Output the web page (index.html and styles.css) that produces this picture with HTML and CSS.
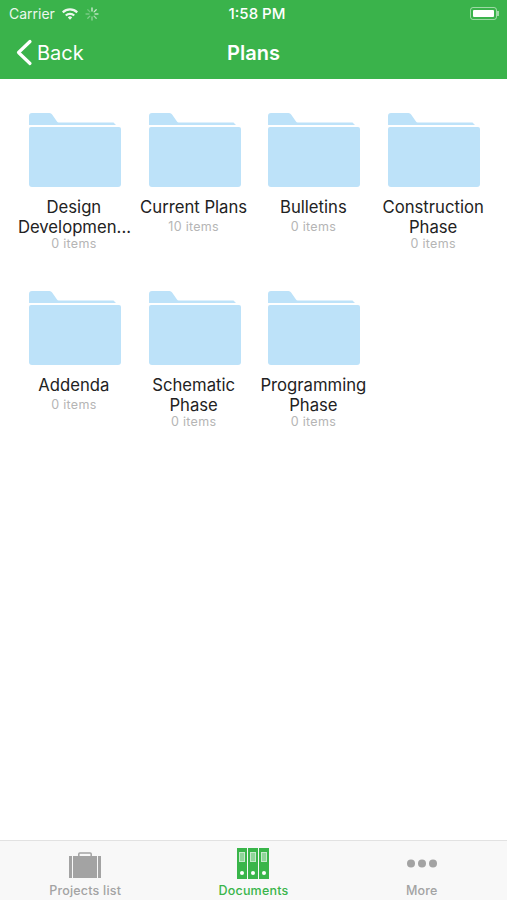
FILE: index.html
```html
<!DOCTYPE html>
<html lang="en">
<head>
    <meta charset="UTF-8">
    <meta name="viewport" content="width=device-width, initial-scale=1.0">
    <title>Plans</title>
    <link rel="stylesheet" href="styles.css">
</head>
<body>

<div class="app">
    <!-- Green header: status bar + nav bar -->
    <header class="header">
        <div class="status-bar">
            <div class="status-left">
                <span>Carrier</span>
                <svg class="wifi" width="18" height="13" viewBox="0 0 18 13">
                    <path d="M1 4.6a11.4 11.4 0 0 1 16 0l-1.500 1.600a9.200 9.200 0 0 0-13 0z" fill="#fff"/>
                    <path d="M4 7.700a7.100 7.100 0 0 1 10 0l-1.600 1.600a4.800 4.800 0 0 0-6.800 0z" fill="#fff"/>
                    <path d="M6.800 10.400a3.100 3.100 0 0 1 4.400 0L9 12.800z" fill="#fff"/>
                </svg>
                <svg class="spinner" width="14" height="14" viewBox="0 0 14 14" stroke="#fff" stroke-width="1.300" stroke-linecap="round">
                    <path d="M7 1v3" opacity=".9"/>
                    <path d="M11.200 2.800L9.100 4.900" opacity=".8"/>
                    <path d="M13 7h-3" opacity=".7"/>
                    <path d="M11.200 11.200L9.100 9.100" opacity=".6"/>
                    <path d="M7 13v-3" opacity=".5"/>
                    <path d="M2.800 11.200l2.100-2.100" opacity=".4"/>
                    <path d="M1 7h3" opacity=".35"/>
                    <path d="M2.800 2.800l2.100 2.100" opacity=".3"/>
                </svg>
            </div>
            <div class="status-time">1:58 PM</div>
            <div class="status-right">
                <div class="battery"><div class="battery-fill"></div></div>
                <div class="battery-tip"></div>
            </div>
        </div>
        <nav class="nav-bar">
            <a class="back" href="#">
                <svg width="18" height="27" viewBox="0 0 18 27">
                    <path d="M15 2.500L3.500 13.500 15 24.500" fill="none" stroke="#fff" stroke-width="3.200" stroke-linecap="round" stroke-linejoin="round"/>
                </svg>
                <span>Back</span>
            </a>
            <h1 class="nav-title">Plans</h1>
        </nav>
    </header>

    <!-- Folder grid -->
    <main class="folders">
        <div class="folder">
            <svg class="folder-icon" viewBox="0 0 92 74"><use href="#folder"/></svg>
            <div class="folder-name">Design Developmen...</div>
            <div class="folder-count">0 items</div>
        </div>
        <div class="folder">
            <svg class="folder-icon" viewBox="0 0 92 74"><use href="#folder"/></svg>
            <div class="folder-name one-line">Current Plans</div>
            <div class="folder-count">10 items</div>
        </div>
        <div class="folder">
            <svg class="folder-icon" viewBox="0 0 92 74"><use href="#folder"/></svg>
            <div class="folder-name one-line">Bulletins</div>
            <div class="folder-count">0 items</div>
        </div>
        <div class="folder">
            <svg class="folder-icon" viewBox="0 0 92 74"><use href="#folder"/></svg>
            <div class="folder-name">Construction Phase</div>
            <div class="folder-count">0 items</div>
        </div>
        <div class="folder">
            <svg class="folder-icon" viewBox="0 0 92 74"><use href="#folder"/></svg>
            <div class="folder-name one-line">Addenda</div>
            <div class="folder-count">0 items</div>
        </div>
        <div class="folder">
            <svg class="folder-icon" viewBox="0 0 92 74"><use href="#folder"/></svg>
            <div class="folder-name">Schematic Phase</div>
            <div class="folder-count">0 items</div>
        </div>
        <div class="folder">
            <svg class="folder-icon" viewBox="0 0 92 74"><use href="#folder"/></svg>
            <div class="folder-name">Programming Phase</div>
            <div class="folder-count">0 items</div>
        </div>
    </main>

    <!-- Tab bar -->
    <footer class="tab-bar">
        <div class="tab">
            <svg class="tab-icon" width="34" height="31" viewBox="0 0 34 31">
                <path d="M10.800 9V6a1 1 0 0 1 1-1h10.400a1 1 0 0 1 1 1v3" fill="none" stroke="#a3a3a3" stroke-width="1.500"/>
                <rect x="1" y="8" width="3" height="22" fill="#a3a3a3"/>
                <rect x="5" y="8" width="24" height="22" fill="#a3a3a3"/>
                <rect x="30" y="8" width="3" height="22" fill="#a3a3a3"/>
            </svg>
            <span class="tab-label">Projects list</span>
        </div>
        <div class="tab tab-active">
            <svg class="tab-icon" width="34" height="31" viewBox="0 0 34 31">
                <g fill="#39b54a">
                    <rect x="1" y="0" width="10" height="31"/>
                    <rect x="12" y="0" width="10" height="31"/>
                    <rect x="23" y="0" width="10" height="31"/>
                </g>
                <g fill="#8fd59a" stroke="#c6e9cb" stroke-width="1">
                    <rect x="3.500" y="4.500" width="5" height="9"/>
                    <rect x="14.500" y="4.500" width="5" height="9"/>
                    <rect x="25.500" y="4.500" width="5" height="9"/>
                </g>
                <g fill="#fff">
                    <circle cx="6" cy="25" r="2"/>
                    <circle cx="17" cy="25" r="2"/>
                    <circle cx="28" cy="25" r="2"/>
                </g>
            </svg>
            <span class="tab-label">Documents</span>
        </div>
        <div class="tab">
            <svg class="tab-icon" width="34" height="31" viewBox="0 0 34 31">
                <g fill="#a3a3a3">
                    <circle cx="6" cy="15.500" r="4"/>
                    <circle cx="17" cy="15.500" r="4"/>
                    <circle cx="28" cy="15.500" r="4"/>
                </g>
            </svg>
            <span class="tab-label">More</span>
        </div>
    </footer>
</div>

<!-- Shared folder shape -->
<svg class="defs" width="0" height="0">
    <symbol id="folder" viewBox="0 0 92 74">
        <path d="M0 11V3a3 3 0 0 1 3-3h17.500a3 3 0 0 1 2.600 1.500L28 8.500a2 2 0 0 0 1.800 1h54.700l2.500 2.500H0z" fill="#bde2f9"/>
        <path d="M0 16a2 2 0 0 1 2-2h88a2 2 0 0 1 2 2v55a3 3 0 0 1-3 3H3a3 3 0 0 1-3-3z" fill="#bde2f9"/>
    </symbol>
</svg>

</body>
</html>
```

FILE: styles.css
```css
body {
    margin: 0;
    padding: 0;
    font-family: Inter, "Liberation Sans", sans-serif;
    background-color: #fff;
}

.app {
    display: flex;
    flex-direction: column;
    height: 900px;
    overflow: hidden;
}

/* Header */
.header {
    background-color: #3ab34b;
    color: #fff;
    height: 79px;
    flex-shrink: 0;
}

.status-bar {
    display: flex;
    justify-content: space-between;
    align-items: center;
    height: 27px;
    padding: 0 8px 0 9px;
    font-size: 14px;
}

.status-left {
    display: flex;
    align-items: center;
    flex: 1;
    gap: 6px;
    opacity: 0.9;
}

.status-time {
    font-size: 15px;
    font-weight: 500;
    margin-left: 6px;
}

.status-right {
    display: flex;
    align-items: center;
    justify-content: flex-end;
    flex: 1;
}

.battery {
    width: 27px;
    height: 13px;
    padding: 2px;
    box-sizing: border-box;
    border: 1px solid rgba(255, 255, 255, 0.5);
    border-radius: 3px;
}

.battery-fill {
    height: 100%;
    background-color: #fff;
    border-radius: 1px;
}

.battery-tip {
    width: 2px;
    height: 5px;
    background-color: rgba(255, 255, 255, 0.5);
}

.nav-bar {
    display: flex;
    align-items: center;
    justify-content: center;
    position: relative;
    height: 52px;
}

.back {
    position: absolute;
    left: 15px;
    top: 12px;
    display: flex;
    align-items: center;
    gap: 4px;
    color: #fff;
    font-size: 20px;
    text-decoration: none;
}

.nav-title {
    margin: 0;
    font-size: 20px;
    font-weight: 600;
}

/* Folders */
.folders {
    flex: 1;
    display: grid;
    grid-template-columns: repeat(4, 1fr);
    grid-auto-rows: 178.2px;
    align-content: start;
    padding: 34px 13px 0 15px;
}

.folder {
    display: flex;
    flex-direction: column;
    align-items: center;
    text-align: center;
}

.folder-icon {
    width: 92px;
    height: 74px;
    margin-bottom: 10px;
}

.folder-name {
    color: #222;
    font-size: 16.7px;
    line-height: 20px;
    width: 112px;
    margin-right: 2px;
}

.folder-name.one-line {
    margin-bottom: 3px;
}

.folder-count {
    color: #b5b5b5;
    font-size: 12.5px;
    line-height: 16px;
    letter-spacing: 0.3px;
    margin: -1px 2px 0 0;
}

.defs {
    position: absolute;
}

/* Tab bar */
.tab-bar {
    display: flex;
    height: 59px;
    flex-shrink: 0;
    padding: 0 1px;
    background-color: #f8f8f8;
    border-top: 1px solid #e2e2e2;
}

.tab {
    flex: 1;
    display: flex;
    flex-direction: column;
    align-items: center;
    padding-top: 7px;
    color: #a3a3a3;
}

.tab-active {
    color: #39b54a;
}

.tab-icon {
    display: block;
    margin-bottom: 4px;
}

.tab-label {
    font-size: 12.5px;
    font-weight: 500;
    line-height: 16px;
    letter-spacing: 0.2px;
}
```
